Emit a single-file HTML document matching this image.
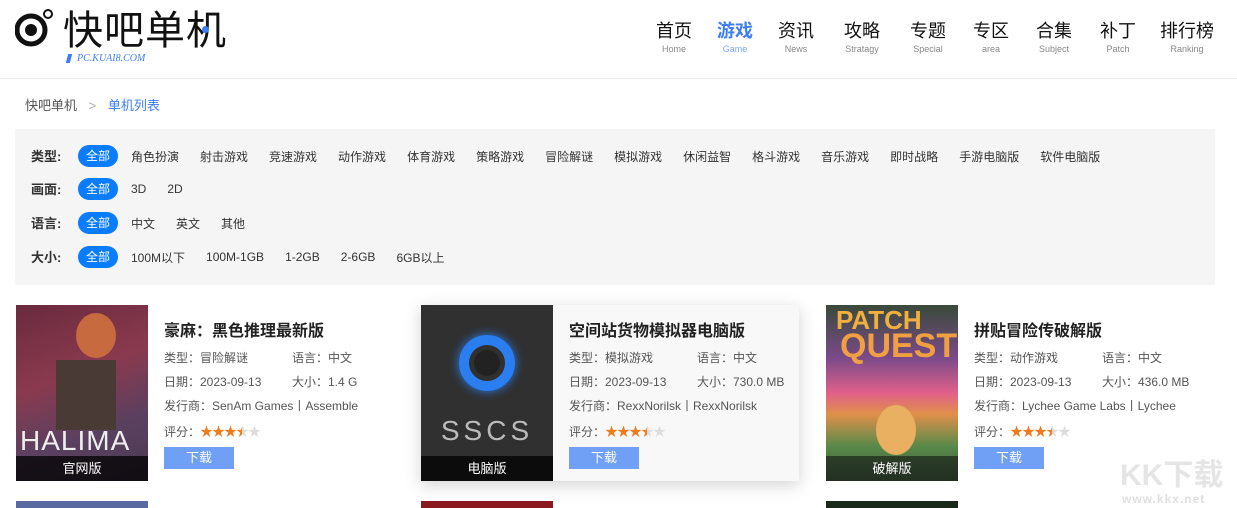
<!DOCTYPE html>
<html><head><meta charset="utf-8"><style>
*{margin:0;padding:0;box-sizing:border-box}
body{width:1237px;height:508px;overflow:hidden;background:#fff;font-family:"Liberation Sans","Noto Sans CJK SC",sans-serif;color:#333;position:relative}
.abs{position:absolute}
.nav{position:absolute;top:20px;text-align:center;width:60px;margin-left:-30px}
.nav b{display:block;font-weight:normal;font-size:18px;color:#111;line-height:22px}
.nav i{display:block;font-style:normal;font-size:9px;color:#888;line-height:12px;margin-top:1px}
.nav.on b{color:#3d7ef5;font-weight:bold}.nav.on i{color:#7aa6f5}
.filter{position:absolute;left:15px;top:129px;width:1200px;height:156px;background:#f5f5f5}
.row{position:absolute;left:16px;display:flex;align-items:center;font-size:12px;height:22px}
.row .lb{font-size:13px;color:#333;width:47px;font-weight:bold;margin-top:-1px}
.row .pill{background:#0a7cff;color:#fff;width:40px;height:22px;border-radius:11px;text-align:center;line-height:22px;margin-right:13px}
.row span.o{margin-right:21px;color:#333}
.card{position:absolute;top:305px;width:380px;height:176px}
.img{position:absolute;left:0;top:0;width:132px;height:176px;overflow:hidden}
.tag{position:absolute;left:0;bottom:0;width:132px;height:25px;background:rgba(0,0,0,.75);color:#fff;font-size:13px;text-align:center;line-height:25px}
.t{position:absolute;left:148px;top:12px;font-size:16px;font-weight:bold;color:#222;white-space:nowrap}
.i{position:absolute;font-size:12px;color:#555;white-space:nowrap}
.st{color:#f07c1c;font-size:13px;letter-spacing:-1px}
.st .g{color:#ddd}
.st .h{background:linear-gradient(90deg,#f07c1c 50%,#ddd 50%);-webkit-background-clip:text;background-clip:text;color:transparent}
.btn{position:absolute;left:148px;top:142px;width:70px;height:22px;background:#70a0f5;color:#fff;font-size:13px;text-align:center;line-height:22px}
</style></head><body>
<svg class="abs" style="left:15px;top:8px" width="40" height="40" viewBox="0 0 40 40"><circle cx="16" cy="22" r="14" fill="none" stroke="#111" stroke-width="5"/><circle cx="16" cy="22" r="6" fill="#111"/><circle cx="33" cy="6" r="4" fill="none" stroke="#111" stroke-width="2"/></svg>
<div class="abs" style="left:63px;top:8px;font-size:40px;line-height:46px;color:#111;letter-spacing:1px">快吧单机</div>
<div class="abs" style="left:202px;top:26px;width:7px;height:7px;border-radius:50%;background:#3d7ef5"></div>
<div class="abs" style="left:67px;top:54px;width:4px;height:9px;background:#3d7ef5;transform:skewX(-15deg)"></div>
<div class="abs" style="left:77px;top:53px;font-family:'Liberation Serif',serif;font-style:italic;font-size:10px;color:#3d7ef5">PC.KUAI8.COM</div>
<div class="nav" style="left:674px"><b>首页</b><i>Home</i></div>
<div class="nav on" style="left:735px"><b>游戏</b><i>Game</i></div>
<div class="nav" style="left:796px"><b>资讯</b><i>News</i></div>
<div class="nav" style="left:862px"><b>攻略</b><i>Stratagy</i></div>
<div class="nav" style="left:928px"><b>专题</b><i>Special</i></div>
<div class="nav" style="left:991px"><b>专区</b><i>area</i></div>
<div class="nav" style="left:1054px"><b>合集</b><i>Subject</i></div>
<div class="nav" style="left:1118px"><b>补丁</b><i>Patch</i></div>
<div class="nav" style="left:1187px"><b>排行榜</b><i>Ranking</i></div>
<div class="abs" style="left:0;top:78px;width:1237px;height:1px;background:#ececec"></div>
<div class="abs" style="left:25px;top:95px;font-size:13px;color:#555">快吧单机 <span style="color:#aaa;margin:0 8px">&gt;</span> <span style="color:#3d7ef5">单机列表</span></div>
<div class="filter">
<div class="row" style="top:16px"><span class="lb">类型:</span><span class="pill">全部</span><span class="o">角色扮演</span><span class="o">射击游戏</span><span class="o">竞速游戏</span><span class="o">动作游戏</span><span class="o">体育游戏</span><span class="o">策略游戏</span><span class="o">冒险解谜</span><span class="o">模拟游戏</span><span class="o">休闲益智</span><span class="o">格斗游戏</span><span class="o">音乐游戏</span><span class="o">即时战略</span><span class="o">手游电脑版</span><span class="o">软件电脑版</span></div>
<div class="row" style="top:49px"><span class="lb">画面:</span><span class="pill">全部</span><span class="o">3D</span><span class="o">2D</span></div>
<div class="row" style="top:83px"><span class="lb">语言:</span><span class="pill">全部</span><span class="o">中文</span><span class="o">英文</span><span class="o">其他</span></div>
<div class="row" style="top:117px"><span class="lb">大小:</span><span class="pill">全部</span><span class="o">100M以下</span><span class="o">100M-1GB</span><span class="o">1-2GB</span><span class="o">2-6GB</span><span class="o">6GB以上</span></div>
</div>

<div class="card" style="left:16px">
<div class="img" style="background:linear-gradient(160deg,#6a2a3e 0%,#8a3a4e 40%,#5a4060 70%,#4a3a50 100%)">
<div class="abs" style="left:60px;top:8px;width:40px;height:45px;border-radius:50%;background:#c86a40"></div>
<div class="abs" style="left:40px;top:55px;width:60px;height:70px;background:#4a3a36"></div>
<div class="abs" style="left:4px;top:120px;color:#eee;font-size:28px;font-family:'Liberation Sans';letter-spacing:1px">HALIMA</div>
<div class="tag">官网版</div></div>
<div class="t">豪麻：黑色推理最新版</div>
<div class="i" style="left:148px;top:44px">类型：冒险解谜</div><div class="i" style="left:276px;top:44px">语言：中文</div>
<div class="i" style="left:148px;top:68px">日期：2023-09-13</div><div class="i" style="left:276px;top:68px">大小：1.4 G</div>
<div class="i" style="left:148px;top:92px">发行商：SenAm Games丨Assemble</div>
<div class="i" style="left:148px;top:116px">评分：<span class="st">★★★<span class="h">★</span><span class="g">★</span></span></div>
<div class="btn">下载</div>
</div>

<div class="abs" style="left:421px;top:305px;width:378px;height:176px;background:#f8f8f8;box-shadow:0 4px 16px rgba(0,0,0,.18)"></div>
<div class="card" style="left:421px">
<div class="img" style="background:#303030">
<div class="abs" style="left:38px;top:30px;width:56px;height:56px;border-radius:50%;border:10px solid #2a7ef0;box-shadow:0 0 10px #2a7ef0"></div>
<div class="abs" style="left:53px;top:45px;width:26px;height:26px;border-radius:50%;background:#222"></div>
<div class="abs" style="left:0;width:132px;top:110px;text-align:center;color:#bbb;font-size:28px;letter-spacing:4px">SSCS</div>
<div class="tag" style="background:#0c0c0c">电脑版</div></div>
<div class="t">空间站货物模拟器电脑版</div>
<div class="i" style="left:148px;top:44px">类型：模拟游戏</div><div class="i" style="left:276px;top:44px">语言：中文</div>
<div class="i" style="left:148px;top:68px">日期：2023-09-13</div><div class="i" style="left:276px;top:68px">大小：730.0 MB</div>
<div class="i" style="left:148px;top:92px">发行商：RexxNorilsk丨RexxNorilsk</div>
<div class="i" style="left:148px;top:116px">评分：<span class="st">★★★<span class="h">★</span><span class="g">★</span></span></div>
<div class="btn">下载</div>
</div>

<div class="card" style="left:826px">
<div class="img" style="background:linear-gradient(180deg,#3a4a3a 0%,#7a4a8a 30%,#e0608a 50%,#e0904a 62%,#5a8a4a 80%,#3a5a3a 100%)">
<div class="abs" style="left:10px;top:0;color:#f0b040;font-size:26px;font-weight:bold">PATCH</div>
<div class="abs" style="left:14px;top:22px;color:#f0a040;font-size:34px;font-weight:bold">QUEST</div>
<div class="abs" style="left:50px;top:100px;width:40px;height:50px;border-radius:50%;background:#e8b060"></div>
<div class="tag" style="background:rgba(20,20,20,.6)">破解版</div></div>
<div class="t">拼贴冒险传破解版</div>
<div class="i" style="left:148px;top:44px">类型：动作游戏</div><div class="i" style="left:276px;top:44px">语言：中文</div>
<div class="i" style="left:148px;top:68px">日期：2023-09-13</div><div class="i" style="left:276px;top:68px">大小：436.0 MB</div>
<div class="i" style="left:148px;top:92px">发行商：Lychee Game Labs丨Lychee</div>
<div class="i" style="left:148px;top:116px">评分：<span class="st">★★★<span class="h">★</span><span class="g">★</span></span></div>
<div class="btn">下载</div>
</div>

<div class="abs" style="left:16px;top:501px;width:132px;height:7px;background:#5a6aa0"></div>
<div class="abs" style="left:421px;top:501px;width:132px;height:7px;background:#8a1a20"></div>
<div class="abs" style="left:826px;top:501px;width:132px;height:7px;background:#1a2a1a"></div>
<div class="abs" style="left:1120px;top:450px;font-size:30px;font-weight:bold;color:rgba(150,150,150,.25)">KK下载</div>
<div class="abs" style="left:1122px;top:492px;font-size:12px;font-weight:bold;color:rgba(150,150,150,.3);letter-spacing:1px">www.kkx.net</div>
</body></html>
